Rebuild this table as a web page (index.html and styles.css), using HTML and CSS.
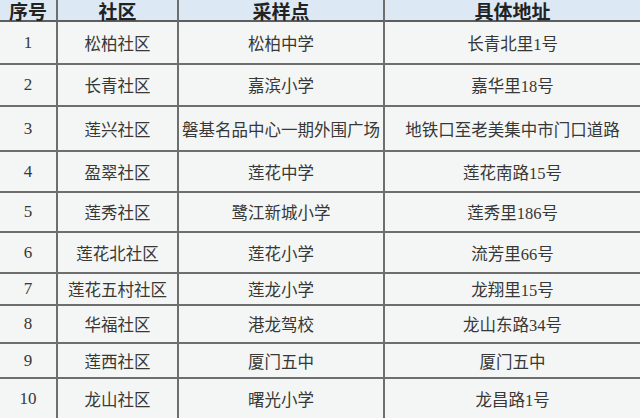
FILE: index.html
```html
<!DOCTYPE html>
<html lang="zh-CN">
<head>
<meta charset="utf-8">
<title>采样点</title>
<link rel="stylesheet" href="styles.css">
</head>
<body>
<div class="sheet">
  <div class="cell head">序号</div><div class="cell head">社区</div><div class="cell head">采样点</div><div class="cell head last">具体地址</div>
  <div class="cell num">1</div><div class="cell">松柏社区</div><div class="cell">松柏中学</div><div class="cell last">长青北里1号</div>
  <div class="cell num">2</div><div class="cell">长青社区</div><div class="cell">嘉滨小学</div><div class="cell last">嘉华里18号</div>
  <div class="cell num">3</div><div class="cell">莲兴社区</div><div class="cell">磐基名品中心一期外围广场</div><div class="cell last">地铁口至老美集中市门口道路</div>
  <div class="cell num">4</div><div class="cell">盈翠社区</div><div class="cell">莲花中学</div><div class="cell last">莲花南路15号</div>
  <div class="cell num">5</div><div class="cell">莲秀社区</div><div class="cell">鹭江新城小学</div><div class="cell last">莲秀里186号</div>
  <div class="cell num">6</div><div class="cell">莲花北社区</div><div class="cell">莲花小学</div><div class="cell last">流芳里66号</div>
  <div class="cell num">7</div><div class="cell">莲花五村社区</div><div class="cell">莲龙小学</div><div class="cell last">龙翔里15号</div>
  <div class="cell num">8</div><div class="cell">华福社区</div><div class="cell">港龙驾校</div><div class="cell last">龙山东路34号</div>
  <div class="cell num">9</div><div class="cell">莲西社区</div><div class="cell">厦门五中</div><div class="cell last">厦门五中</div>
  <div class="cell num bottom">10</div><div class="cell bottom">龙山社区</div><div class="cell bottom">曙光小学</div><div class="cell last bottom">龙昌路1号</div>
</div>
</body>
</html>
```
FILE: styles.css
```css
html, body {
  margin: 0;
  padding: 0;
  background: #f3f6f4;
}
.sheet {
  width: 640px;
  height: 418px;
  display: grid;
  grid-template-columns: 58px 121px 206px 1fr;
  grid-template-rows: 22px 43px 42px 45px 41px 40px 41px 32px 38px 35px 39px;
  font-family: "Liberation Serif", "Noto Sans CJK SC", serif;
  color: #383838;
  font-size: 16.5px;
  overflow: hidden;
}
.cell {
  display: flex;
  align-items: center;
  justify-content: center;
  white-space: nowrap;
  border-right: 2px solid #6e6e6e;
  border-bottom: 2px solid #6e6e6e;
  background: #f3f6f4;
}
.cell.last {
  border-right: none;
}
.cell.bottom {
  border-bottom: none;
}
.cell.head {
  background: #dce8f4;
  font-weight: bold;
  font-size: 19px;
  color: #222;
  border-bottom-color: #5e5e5e;
}
.cell.num {
  font-size: 17px;
}
```
